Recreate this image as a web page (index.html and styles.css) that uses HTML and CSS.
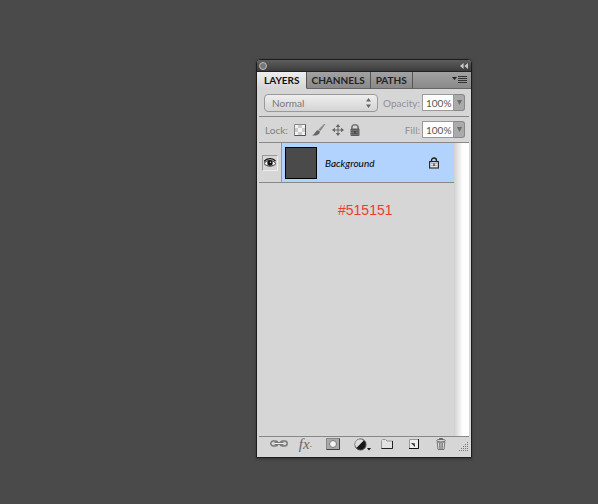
FILE: index.html
```
<!DOCTYPE html>
<html lang="en">
<head>
  <meta charset="UTF-8">
  <title>Layers</title>
  <link rel="stylesheet" href="styles.css">
</head>
<body>
  <section class="panel">
    <header class="titlebar">
      <button class="close" aria-label="Close"></button>
      <button class="collapse" aria-label="Collapse">
        <svg width="8" height="6" viewBox="0 0 8 6"><path d="M3.6 0v6L0 3zM8 0v6L4.4 3z" fill="#c8c8c8"/></svg>
      </button>
    </header>

    <nav class="tabs">
      <button class="tab active">LAYERS</button>
      <button class="tab">CHANNELS</button>
      <button class="tab">PATHS</button>
      <button class="menu" aria-label="Panel menu">
        <svg width="15" height="8" viewBox="0 0 15 8"><path d="M0 1h5L2.500 4z" fill="#222"/><path d="M6 .5h9M6 2.500h9M6 4.500h9M6 6.500h9" stroke="#333"/></svg>
      </button>
    </nav>

    <div class="content">
      <div class="row blend">
        <div class="select">
          <select aria-label="Blend mode"><option>Normal</option></select>
          <svg class="arrows" width="5" height="10" viewBox="0 0 5 10"><path d="M0 3.500L2.500 0 5 3.500zM0 6.500L2.500 10 5 6.500z" fill="#666"/></svg>
        </div>
        <label class="percent-label" for="opacity">Opacity:</label>
        <div class="percent">
          <input id="opacity" type="text" value="100%">
          <button aria-label="Opacity slider"><svg width="5" height="5" viewBox="0 0 5 5"><path d="M0 0h5L2.500 5z" fill="#6b6b6b"/></svg></button>
        </div>
      </div>

      <div class="row locks">
        <span>Lock:</span>
        <div class="lock-buttons">
          <button aria-label="Lock transparent pixels">
            <svg width="12" height="12" viewBox="0 0 12 12"><path d="M.5.5h11v11H.5z" fill="#f3f3f3" stroke="#888"/><path d="M4 1h4v3H4zM1 4h3v4H1zM8 4h3v4H8zM4 8h4v3H4z" fill="#ccc"/><path d="M.5 11.500h11V.5" fill="none" stroke="#555"/></svg>
          </button>
          <button aria-label="Lock image pixels">
            <svg width="14" height="12" viewBox="0 0 14 12"><path d="M13.500 0L8.500 7 6.500 5.500 12 0z" fill="#8a8a8a"/><path d="M6 6l2 1.500C7.500 11 4 12 0 11.500 3 10.500 3 7 6 6z" fill="#666"/></svg>
          </button>
          <button aria-label="Lock position">
            <svg width="12" height="12" viewBox="0 0 12 12"><path d="M6 1v10M1 6h10" stroke="#666"/><path d="M6 0l2.300 3H3.700zM6 12l2.300-3H3.700zM0 6l3-2.300v4.600zM12 6L9 3.700v4.600z" fill="#666"/></svg>
          </button>
          <button aria-label="Lock all">
            <svg width="10" height="12" viewBox="0 0 10 12"><path d="M1.800 5V4a3.200 3.200 0 0 1 6.400 0v1" fill="none" stroke="#777" stroke-width="1.600"/><rect x=".5" y="4.500" width="9" height="7.500" rx="1" fill="#5c5c5c"/><path d="M1 6.500h8M1 8.500h8M1 10.500h8" stroke="#757575" stroke-width=".8"/><path d="M4.500 7h1v2.500h-1z" fill="#333"/></svg>
          </button>
        </div>
        <label class="percent-label" for="fill">Fill:</label>
        <div class="percent">
          <input id="fill" type="text" value="100%">
          <button aria-label="Fill slider"><svg width="5" height="5" viewBox="0 0 5 5"><path d="M0 0h5L2.500 5z" fill="#6b6b6b"/></svg></button>
        </div>
      </div>

      <div class="layers">
        <div class="list">
          <div class="layer">
            <div class="visibility">
              <button class="eye" aria-label="Toggle visibility">
                <svg width="12" height="10" viewBox="0 0 12 10"><path d="M0 5.500C2.500 1.500 9 1.500 12 5.500 9 9 3 9 0 5.500z" fill="#fff" stroke="#222"/><path d="M0 3.500C2.500-.2 9-.2 11.500 3" fill="none" stroke="#111" stroke-width="1.300"/><circle cx="6" cy="5" r="2.700" fill="#111"/><circle cx="6.500" cy="4.300" r=".7" fill="#ddd"/></svg>
              </button>
            </div>
            <div class="info">
              <div class="thumb"></div>
              <span class="name">Background</span>
              <svg width="10" height="12" viewBox="0 0 10 12"><path d="M2.500 4.500V3.500a2.500 2.500 0 0 1 5 0v1" fill="none" stroke="#222" stroke-width="1.400"/><rect x=".6" y="4.600" width="8.800" height="6.400" fill="#e4e4e4" stroke="#222" stroke-width="1.100"/><path d="M1.500 6.500h7M1.500 8.500h7" stroke="#b5b5b5"/><path d="M4.500 6.500h1v2.500h-1z" fill="#111"/></svg>
            </div>
          </div>
          <p class="note">#515151</p>
        </div>
        <div class="scrollbar"></div>
      </div>

      <footer class="toolbar">
        <button aria-label="Link layers">
          <svg width="18" height="8" viewBox="0 0 18 8"><g fill="none" stroke="#777" stroke-width="1.400"><rect x=".8" y="1" width="7" height="5" rx="2.500"/><rect x="10.200" y="1" width="7" height="5" rx="2.500"/></g><path d="M4.500 3.500h9" stroke="#eee" stroke-width="3"/><path d="M4.500 2.500h9M4.500 4.500h9" stroke="#777"/></svg>
        </button>
        <button class="fx" aria-label="Layer style">fx<small>.</small></button>
        <button aria-label="Add layer mask">
          <svg width="14" height="12" viewBox="0 0 14 12"><path d="M.5.5h13v11H.5z" fill="#aaa" stroke="#888"/><path d="M.5 11.500h13V.5" fill="none" stroke="#444"/><circle cx="7" cy="6" r="3.500" fill="#f4f4f4" stroke="#777"/></svg>
        </button>
        <button class="adjustment" aria-label="Adjustment layer">
          <svg width="17" height="13" viewBox="0 0 17 13"><circle cx="6.500" cy="6.500" r="5.500" fill="#171717" stroke="#444"/><path d="M2.600 9.700A5 5 0 0 1 9.700 2.600z" fill="#ddd"/><path d="M13 10h4l-2 2.500z" fill="#111"/></svg>
        </button>
        <button aria-label="New group">
          <svg width="12" height="10" viewBox="0 0 12 10"><path d="M.5 9.500V1.500l1-1h3l1.500 1.500h5.500v7.500z" fill="#e2e2e2" stroke="#999"/><path d="M.5 9.500h11V2" fill="none" stroke="#222"/></svg>
        </button>
        <button aria-label="New layer">
          <svg width="10" height="10" viewBox="0 0 10 10"><path d="M.5.5h9v9h-9z" fill="#eee" stroke="#999"/><path d="M9.500 0v9.500H0" fill="none" stroke="#111"/><path d="M2 4h4v4z" fill="#222"/><path d="M3.500 4H6v2.500z" fill="#777"/></svg>
        </button>
        <button aria-label="Delete layer">
          <svg width="10" height="12" viewBox="0 0 10 12"><path d="M1.200 4h7.600l-.8 7.500H2z" fill="#ddd" stroke="#777"/><path d="M3.500 5l.3 6M5 5v6M6.500 5l-.3 6" stroke="#666" stroke-width=".8"/><ellipse cx="5" cy="2.700" rx="4.400" ry="1.300" fill="#ddd" stroke="#666"/><path d="M3.500 1.500V.5h3v1" fill="none" stroke="#666"/></svg>
        </button>
        <svg class="grip" width="10" height="10" viewBox="0 0 10 10"><path d="M8 .5h2M6 2.500h4M4 4.500h6M2 6.500h8M0 8.500h10" stroke="#777" stroke-dasharray="1 1"/></svg>
      </footer>
    </div>
  </section>
</body>
</html>
```
FILE: styles.css
```
* { box-sizing: border-box; }
body {
  display: flex;
  min-height: 100vh;
  margin: 0;
  padding: 59px 126px 46px 256px;
  background: #4a4a4a;
  color: #808080;
  font: 10px/14px Lato, "Open Sans", sans-serif;
}
button { display: flex; align-items: center; justify-content: center; padding: 0; border: 0; background: none; color: inherit; font: inherit; }
svg { display: block; flex: none; }

.panel {
  display: flex;
  flex-direction: column;
  flex: 1;
  border: 1px solid #1c1c1c;
  border-radius: 4px 4px 0 0;
  background: #d6d6d6;
  box-shadow: 0 1px 3px #333;
  overflow: hidden;
}

.titlebar {
  display: flex;
  align-items: center;
  justify-content: space-between;
  height: 12px;
  padding: 0 3px 0 2px;
  background: linear-gradient(#5e5e5e, #3c3c3c);
  border-bottom: 1px solid #222;
}
.close { width: 8px; height: 8px; border: 1px solid #bbb; border-radius: 50%; background: #777; }

.tabs { display: flex; height: 17px; background: linear-gradient(#a2a2a2, #888); }
.tab { padding: 0 5px; border-right: 1px solid #555; border-bottom: 1px solid #666; color: #222; font-weight: bold; }
.tab.active { padding: 0 6px 0 7px; border-bottom-color: #d6d6d6; background: linear-gradient(#eee, #d6d6d6); color: #111; }
.menu { flex: 1; justify-content: flex-end; padding-right: 4px; border-bottom: 1px solid #666; }

.content { display: flex; flex-direction: column; flex: 1; padding: 0 2px; }
.row { display: flex; align-items: center; border-bottom: 1px solid #888; }
.blend { height: 28px; padding: 0 4px 0 5px; }
.locks { height: 26px; padding: 0 4px 0 6px; }

.select { position: relative; flex: 1; margin-right: 5px; }
.select select {
  display: block;
  width: 100%;
  height: 18px;
  padding: 0 7px;
  appearance: none;
  border: 1px solid #999;
  border-radius: 4px;
  background: linear-gradient(#eee, #d4d4d4);
  color: #777;
  font: inherit;
}
.arrows { position: absolute; top: 4px; right: 7px; }

.percent-label { margin-right: 2px; color: #909090; }
.percent { display: flex; width: 43px; height: 17px; }
.percent input { width: 32px; padding: 0 0 0 3px; border: 1px solid #999; background: #fff; color: #555; font: inherit; }
.percent button { width: 11px; border: 1px solid #888; border-left: 0; border-radius: 0 3px 3px 0; background: #aaa; }

.lock-buttons { display: flex; align-items: center; gap: 6px; flex: 1; margin-left: 6px; }

.layers { display: flex; flex: 1; }
.list { flex: 1; }
.layer { display: flex; height: 40px; border-bottom: 1px solid #888; }
.visibility { display: flex; align-items: center; width: 23px; padding-left: 3px; border-right: 1px solid #999; }
.eye { width: 16px; height: 16px; border: 1px solid; border-color: #999 #eee #eee #999; }
.info { display: flex; align-items: center; flex: 1; padding: 0 15px 0 3px; background: #b3d3ff; }
.thumb { width: 32px; height: 32px; border: 1px solid #000; background: #4a4a4a; }
.name { flex: 1; margin-left: 8px; color: #000; font-style: italic; }
.note { margin: 19px 0 0 79px; color: #f03a30; font: 14px/16px "Liberation Sans", Arial, sans-serif; }
.scrollbar { width: 15px; background: linear-gradient(to right, #d0d0d0, #fff 60%); }

.toolbar { display: flex; height: 21px; padding: 0 0 6px 6px; border-top: 1px solid #888; }
.toolbar button { width: 27px; }
.toolbar .fx { color: #666; font: italic 15px/14px "Liberation Serif", serif; }
.toolbar .adjustment { padding-left: 5px; }
.fx small { font-size: 10px; }
.grip { margin: 5px 0 0 auto; }
```
